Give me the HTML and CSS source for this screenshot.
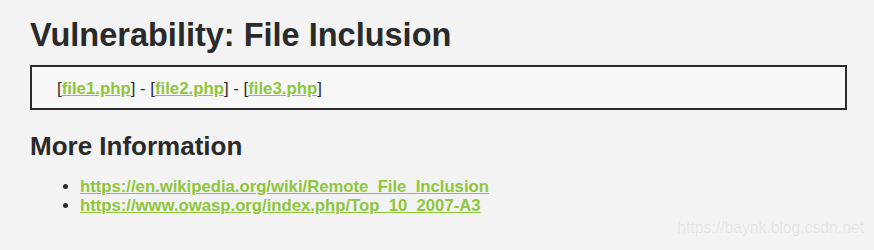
FILE: index.html
```html
<!DOCTYPE html>
<html>
<head>
<meta charset="utf-8">
<link rel="stylesheet" href="styles.css">
</head>
<body>
<div class="page">
  <h1 class="title">Vulnerability: File Inclusion</h1>
  <div class="vulnerable-code">
    [<a href="#">file1.php</a>] - [<a href="#">file2.php</a>] - [<a href="#">file3.php</a>]
  </div>
  <h2 class="subtitle">More Information</h2>
  <ul class="info-list">
    <li><a href="#">https://en.wikipedia.org/wiki/Remote_File_Inclusion</a></li>
    <li><a href="#">https://www.owasp.org/index.php/Top_10_2007-A3</a></li>
  </ul>
</div>
<div class="watermark">https://baynk.blog.csdn.net</div>
</body>
</html>
```
FILE: styles.css
```css
html, body {
  margin: 0;
  padding: 0;
  height: 100%;
}
body {
  background: #f3f3f3;
  font-family: "Liberation Sans", Arial, sans-serif;
  color: #2a2a2a;
  font-size: 15px;
  position: relative;
  overflow: hidden;
}
.page {
  padding: 15px 27px 0 30px;
}
.title {
  font-size: 32.5px;
  font-weight: bold;
  margin: 0 0 10px 0;
  line-height: 40px;
}
.vulnerable-code {
  background: #f7f8f7;
  border: 2px solid #2a2a2a;
  padding: 11px 25px 9px 25px;
  line-height: 21px;
  font-size: 16.8px;
}
a {
  color: #8fc63c;
  font-weight: bold;
}
.subtitle {
  font-size: 26px;
  font-weight: bold;
  margin: 20px 0 15px 0;
  line-height: 32px;
}
.info-list {
  margin: 0;
  padding-left: 50px;
  line-height: 19px;
  font-size: 16.7px;
}
.watermark {
  position: absolute;
  right: 10px;
  bottom: 13px;
  color: #e4e4e4;
  font-family: "Liberation Sans", Arial, sans-serif;
  font-size: 15.7px;
  text-shadow: 0 0 1px #fff;
}
```
